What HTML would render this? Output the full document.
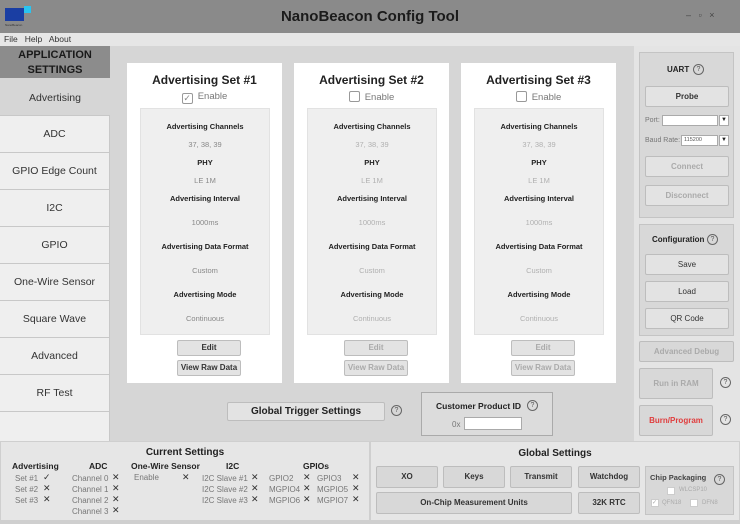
<!DOCTYPE html>
<html><head><meta charset="utf-8"><style>
*{box-sizing:border-box;margin:0;padding:0}
body{width:740px;height:524px;position:relative;overflow:hidden;background:#d6d6d6;font-family:"Liberation Sans",sans-serif;color:#222}
.a{position:absolute}
.c{text-align:center}
.b{font-weight:bold}
.btn{position:absolute;background:#e3e3e3;border:1px solid #bdbdbd;border-radius:2px;text-align:center;font-weight:bold;font-size:8px;color:#333}
.si{position:absolute;left:0;width:110px;height:37px;background:#efefef;border-top:1px solid #c8c8c8;border-right:1px solid #c8c8c8;text-align:center;line-height:37px;font-size:10.5px;color:#333}
.q{position:absolute;width:11px;height:11px;border:1px solid #666;border-radius:50%;font-size:7px;line-height:9px;text-align:center;color:#555}
.card{position:absolute;top:63px;width:155px;height:320px;background:#fff}
.card .t{position:absolute;top:10px;left:0;width:155px;text-align:center;font-weight:bold;font-size:12px}
.card .en{position:absolute;top:28px;left:0;width:155px;text-align:center;font-size:9.5px;color:#777}
.cb{display:inline-block;width:11px;height:11px;border:1px solid #999;border-radius:2px;vertical-align:-2px;margin-right:5px;background:#fff;font-size:9px;line-height:9px;color:#888}
.inner{position:absolute;left:13px;top:45px;width:130px;height:227px;background:#efefef;border:1px solid #e2e2e2}
.inner div{position:absolute;left:0;width:128px;text-align:center;font-size:7.5px}
.l{font-weight:bold;color:#222}
.v{color:#888}
.dim .v{color:#b0b0b0}
.dim .btn{color:#aaa}
.small{font-size:8px;color:#777;position:absolute}
.x{position:absolute;font-size:9px;color:#333}
</style></head><body>
<div class="a" style="left:0;top:0;width:740px;height:33px;background:#8a8a8a"></div>
<div class="a" style="left:5px;top:8px;width:19px;height:13px;background:#1a3ea3"></div>
<div class="a" style="left:24px;top:6px;width:7px;height:7px;background:#2ac4f0"></div>
<div class="a" style="left:5px;top:23px;font-size:3px;color:#333">NanoBeacon</div>
<div class="a c b" style="left:0;top:8px;width:740px;font-size:15px;color:#1b1b1b">NanoBeacon Config Tool</div>
<div class="a" style="left:686px;top:10px;font-size:9px;color:#444">–&nbsp;&nbsp;&nbsp;▫&nbsp;&nbsp;&nbsp;×</div>
<div class="a" style="left:0;top:33px;width:740px;height:13px;background:#e6e6e6"></div>
<div class="a" style="left:4px;top:34px;font-size:8.5px;color:#333">File&nbsp;&nbsp; Help&nbsp;&nbsp; About</div>

<div class="a c b" style="left:0;top:46px;width:110px;height:32px;background:#8c8c8c;font-size:11px;line-height:15px;padding-top:2px;color:#1a1a1a">APPLICATION<br>SETTINGS</div>
<div class="a c" style="left:0;top:78px;width:110px;height:37px;line-height:40px;font-size:10.5px;color:#333">Advertising</div>
<div class="si" style="top:115px">ADC</div>
<div class="si" style="top:152px">GPIO Edge Count</div>
<div class="si" style="top:189px">I2C</div>
<div class="si" style="top:226px">GPIO</div>
<div class="si" style="top:263px">One-Wire Sensor</div>
<div class="si" style="top:300px">Square Wave</div>
<div class="si" style="top:337px">Advanced</div>
<div class="si" style="top:374px">RF Test</div>
<div class="si" style="top:411px;height:30px"></div>

<div class="card" style="left:127px">
<div class="t">Advertising Set #1</div>
<div class="en"><span class="cb">✓</span>Enable</div>
<div class="inner">
<div class="l" style="top:13px">Advertising Channels</div><div class="v" style="top:31px">37, 38, 39</div>
<div class="l" style="top:49px">PHY</div><div class="v" style="top:67px">LE 1M</div>
<div class="l" style="top:85px">Advertising Interval</div><div class="v" style="top:109px">1000ms</div>
<div class="l" style="top:133px">Advertising Data Format</div><div class="v" style="top:157px">Custom</div>
<div class="l" style="top:181px">Advertising Mode</div><div class="v" style="top:205px">Continuous</div>
</div>
<div class="btn" style="left:50px;top:277px;width:64px;height:16px;line-height:14px">Edit</div>
<div class="btn" style="left:50px;top:297px;width:64px;height:16px;line-height:14px">View Raw Data</div>
</div>

<div class="card dim" style="left:294px">
<div class="t">Advertising Set #2</div>
<div class="en"><span class="cb"></span>Enable</div>
<div class="inner">
<div class="l" style="top:13px">Advertising Channels</div><div class="v" style="top:31px">37, 38, 39</div>
<div class="l" style="top:49px">PHY</div><div class="v" style="top:67px">LE 1M</div>
<div class="l" style="top:85px">Advertising Interval</div><div class="v" style="top:109px">1000ms</div>
<div class="l" style="top:133px">Advertising Data Format</div><div class="v" style="top:157px">Custom</div>
<div class="l" style="top:181px">Advertising Mode</div><div class="v" style="top:205px">Continuous</div>
</div>
<div class="btn" style="left:50px;top:277px;width:64px;height:16px;line-height:14px">Edit</div>
<div class="btn" style="left:50px;top:297px;width:64px;height:16px;line-height:14px">View Raw Data</div>
</div>

<div class="card dim" style="left:461px">
<div class="t">Advertising Set #3</div>
<div class="en"><span class="cb"></span>Enable</div>
<div class="inner">
<div class="l" style="top:13px">Advertising Channels</div><div class="v" style="top:31px">37, 38, 39</div>
<div class="l" style="top:49px">PHY</div><div class="v" style="top:67px">LE 1M</div>
<div class="l" style="top:85px">Advertising Interval</div><div class="v" style="top:109px">1000ms</div>
<div class="l" style="top:133px">Advertising Data Format</div><div class="v" style="top:157px">Custom</div>
<div class="l" style="top:181px">Advertising Mode</div><div class="v" style="top:205px">Continuous</div>
</div>
<div class="btn" style="left:50px;top:277px;width:64px;height:16px;line-height:14px">Edit</div>
<div class="btn" style="left:50px;top:297px;width:64px;height:16px;line-height:14px">View Raw Data</div>
</div>

<div class="btn" style="left:227px;top:402px;width:158px;height:19px;line-height:17px;font-size:10px;color:#222">Global Trigger Settings</div>
<div class="q" style="left:391px;top:405px">?</div>
<div class="a" style="left:421px;top:392px;width:132px;height:44px;background:#dcdcdc;border:1px solid #aaa"></div>
<div class="a b" style="left:436px;top:401px;font-size:8.5px">Customer Product ID</div>
<div class="q" style="left:527px;top:400px">?</div>
<div class="small" style="left:452px;top:420px">0x</div>
<div class="a" style="left:464px;top:417px;width:58px;height:13px;background:#fff;border:1px solid #aaa"></div>

<div class="a" style="left:634px;top:46px;width:106px;height:395px;background:#e4e4e4"></div>
<div class="a" style="left:639px;top:52px;width:95px;height:166px;background:#d8d8d8;border:1px solid #c4c4c4"></div>
<div class="a b" style="left:667px;top:65px;font-size:8px">UART</div>
<div class="q" style="left:693px;top:64px">?</div>
<div class="btn" style="left:645px;top:86px;width:84px;height:21px;line-height:19px">Probe</div>
<div class="small" style="left:645px;top:117px;font-size:7px">Port:</div>
<div class="a" style="left:662px;top:115px;width:56px;height:11px;background:#fff;border:1px solid #aaa"></div>
<div class="a" style="left:719px;top:115px;width:10px;height:11px;background:#fff;border:1px solid #aaa;font-size:6px;text-align:center;line-height:9px">▼</div>
<div class="small" style="left:645px;top:137px;font-size:7px">Baud Rate:</div>
<div class="a" style="left:681px;top:135px;width:37px;height:11px;background:#fff;border:1px solid #aaa;font-size:5.5px;line-height:9px;padding-left:2px;color:#555">115200</div>
<div class="a" style="left:719px;top:135px;width:10px;height:11px;background:#fff;border:1px solid #aaa;font-size:6px;text-align:center;line-height:9px">▼</div>
<div class="btn" style="left:645px;top:156px;width:84px;height:21px;line-height:19px;color:#aaa">Connect</div>
<div class="btn" style="left:645px;top:185px;width:84px;height:21px;line-height:19px;color:#aaa">Disconnect</div>
<div class="a" style="left:639px;top:224px;width:95px;height:112px;background:#d8d8d8;border:1px solid #c4c4c4"></div>
<div class="a b" style="left:652px;top:235px;font-size:8px">Configuration</div>
<div class="q" style="left:707px;top:234px">?</div>
<div class="btn" style="left:645px;top:254px;width:84px;height:21px;line-height:19px;font-weight:normal">Save</div>
<div class="btn" style="left:645px;top:281px;width:84px;height:21px;line-height:19px;font-weight:normal">Load</div>
<div class="btn" style="left:645px;top:308px;width:84px;height:21px;line-height:19px;font-weight:normal">QR Code</div>
<div class="btn" style="left:639px;top:341px;width:95px;height:21px;line-height:19px;color:#aaa;background:#d8d8d8">Advanced Debug</div>
<div class="btn" style="left:639px;top:368px;width:74px;height:31px;line-height:29px;color:#aaa;background:#d8d8d8">Run in RAM</div>
<div class="q" style="left:720px;top:377px">?</div>
<div class="btn" style="left:639px;top:405px;width:74px;height:31px;line-height:29px;color:#e03c3c;background:#d8d8d8">Burn/Program</div>
<div class="q" style="left:720px;top:414px">?</div>

<div class="a" style="left:0;top:441px;width:740px;height:83px;background:#cfcfcf"></div>
<div class="a" style="left:1px;top:442px;width:368px;height:78px;background:#e6e6e6"></div>
<div class="a" style="left:371px;top:442px;width:368px;height:78px;background:#e6e6e6"></div>
<div class="a b c" style="left:0;top:447px;width:370px;font-size:10px">Current Settings</div>
<div class="a b" style="left:12px;top:461px;font-size:8.5px">Advertising</div>
<div class="a b" style="left:89px;top:461px;font-size:8.5px">ADC</div>
<div class="a b" style="left:131px;top:461px;font-size:8.5px">One-Wire Sensor</div>
<div class="a b" style="left:226px;top:461px;font-size:8.5px">I2C</div>
<div class="a b" style="left:303px;top:461px;font-size:8.5px">GPIOs</div>
<div class="small" style="left:15px;top:473px;line-height:11px">Set #1<br>Set #2<br>Set #3</div>
<div class="x" style="left:43px;top:472px;line-height:11px">✓<br>✕<br>✕</div>
<div class="small" style="left:72px;top:473px;line-height:11px">Channel 0<br>Channel 1<br>Channel 2<br>Channel 3</div>
<div class="x" style="left:112px;top:472px;line-height:11px">✕<br>✕<br>✕<br>✕</div>
<div class="small" style="left:134px;top:473px">Enable</div>
<div class="x" style="left:182px;top:472px">✕</div>
<div class="small" style="left:202px;top:473px;line-height:11px">I2C Slave #1<br>I2C Slave #2<br>I2C Slave #3</div>
<div class="x" style="left:251px;top:472px;line-height:11px">✕<br>✕<br>✕</div>
<div class="small" style="left:269px;top:473px;line-height:11px">GPIO2<br>MGPIO4<br>MGPIO6</div>
<div class="x" style="left:303px;top:472px;line-height:11px">✕<br>✕<br>✕</div>
<div class="small" style="left:317px;top:473px;line-height:11px">GPIO3<br>MGPIO5<br>MGPIO7</div>
<div class="x" style="left:352px;top:472px;line-height:11px">✕<br>✕<br>✕</div>

<div class="a b c" style="left:370px;top:448px;width:370px;font-size:10px">Global Settings</div>
<div class="btn" style="left:376px;top:466px;width:62px;height:22px;line-height:20px;background:#d8d8d8">XO</div>
<div class="btn" style="left:443px;top:466px;width:62px;height:22px;line-height:20px;background:#d8d8d8">Keys</div>
<div class="btn" style="left:510px;top:466px;width:62px;height:22px;line-height:20px;background:#d8d8d8">Transmit</div>
<div class="btn" style="left:578px;top:466px;width:62px;height:22px;line-height:20px;background:#d8d8d8">Watchdog</div>
<div class="btn" style="left:376px;top:492px;width:196px;height:22px;line-height:20px;background:#d8d8d8">On-Chip Measurement Units</div>
<div class="btn" style="left:578px;top:492px;width:62px;height:22px;line-height:20px;background:#d8d8d8">32K RTC</div>
<div class="a" style="left:645px;top:466px;width:89px;height:49px;background:#d8d8d8;border:1px solid #c4c4c4"></div>
<div class="a b" style="left:650px;top:473px;font-size:7.5px;color:#444">Chip Packaging</div>
<div class="q" style="left:714px;top:474px">?</div>
<div class="a" style="left:667px;top:487px;width:8px;height:8px;background:#fff;border:1px solid #ccc"></div>
<div class="a" style="left:679px;top:487px;font-size:6px;color:#aaa">WLCSP10</div>
<div class="a" style="left:651px;top:499px;width:8px;height:8px;background:#fff;border:1px solid #ccc;font-size:6px;line-height:6px;color:#aaa">✓</div>
<div class="a" style="left:662px;top:500px;font-size:6px;color:#aaa">QFN18</div>
<div class="a" style="left:690px;top:499px;width:8px;height:8px;background:#fff;border:1px solid #ccc"></div>
<div class="a" style="left:702px;top:500px;font-size:6px;color:#aaa">DFN8</div>
</body></html>
